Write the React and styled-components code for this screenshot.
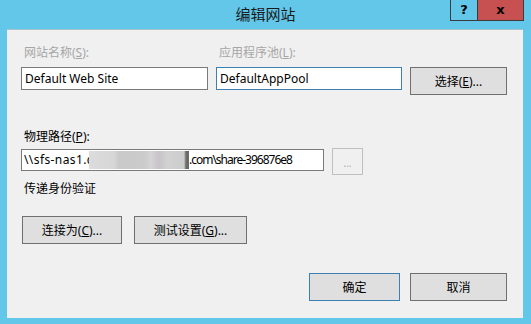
import React from 'react';
import styled, { createGlobalStyle } from 'styled-components';

const GlobalStyle = createGlobalStyle`
  body {
    margin: 0;
    background: #63c7ea;
    font-family: "Noto Sans", "Noto Sans CJK SC", sans-serif;
    font-size: 12px;
    color: #000;
  }
`;

const App = () => {
  return (
    <Window>
      <GlobalStyle />
      <TitleBar>
        <Title>编辑网站</Title>
        <Controls>
          <CaptionButton>?</CaptionButton>
          <CaptionButton $close>x</CaptionButton>
        </Controls>
      </TitleBar>

      <Client>
        <SiteGrid>
          <Label $disabled>网站名称(<u>S</u>):</Label>
          <Label $disabled>应用程序池(<u>L</u>):</Label>
          <span />
          <TextBox>Default Web Site</TextBox>
          <TextBox $focused>DefaultAppPool</TextBox>
          <Button>选择(<u>E</u>)...</Button>
        </SiteGrid>

        <PathLabel>物理路径(<u>P</u>):</PathLabel>
        <PathRow>
          <PathBox>
            <PathPart $spacing={0.4}>\\sfs-nas1.c</PathPart>
            <Blur />
            <PathPart $spacing={-1}>.com\share-396876e8</PathPart>
          </PathBox>
          <BrowseButton>...</BrowseButton>
        </PathRow>

        <AuthText>传递身份验证</AuthText>

        <ActionRow>
          <Button $width={100}>连接为(<u>C</u>)...</Button>
          <Button $width={113}>测试设置(<u>G</u>)...</Button>
        </ActionRow>

        <Footer>
          <Button $width={91} $default>确定</Button>
          <Button $width={97}>取消</Button>
        </Footer>
      </Client>
    </Window>
  );
};

const Window = styled.div`
  width: 531px;
  height: 324px;
  display: flex;
  flex-direction: column;
  background: #63c7ea;
`;

const TitleBar = styled.div`
  height: 29px;
  display: grid;
  grid-template-columns: 1fr auto 1fr;
`;

const Title = styled.div`
  grid-column: 2;
  font-size: 15px;
  line-height: 29px;
  color: #1a1a1a;
`;

const Controls = styled.div`
  grid-column: 3;
  justify-self: end;
  align-self: start;
  display: flex;
  margin-right: 7px;
`;

const CaptionButton = styled.div`
  width: ${(p) => (p.$close ? 46 : 28)}px;
  height: 21px;
  box-sizing: border-box;
  border: 1px solid #3c3c3c;
  border-top: none;
  border-left-width: ${(p) => (p.$close ? 0 : 1)}px;
  background: ${(p) => (p.$close ? '#c75050' : '#63c7ea')};
  display: flex;
  align-items: center;
  justify-content: center;
  font-family: "DejaVu Sans", sans-serif;
  font-weight: bold;
  font-size: 13px;
  line-height: 1;
  padding-bottom: 2px;
`;

const Client = styled.div`
  flex: 1;
  margin: 0 8px 6px 7px;
  background: #f0f0f0;
  border-top: 1px solid #a9c3d0;
  padding: 15px 16px 0 14px;
  display: flex;
  flex-direction: column;
`;

const SiteGrid = styled.div`
  display: grid;
  grid-template-columns: 187px 186px 97px;
  column-gap: 8px;
  row-gap: 6px;
  align-items: start;
`;

const Label = styled.div`
  line-height: 16px;
  padding-left: 3px;
  color: ${(p) => (p.$disabled ? '#a6a6a6' : '#000')};
  white-space: nowrap;
`;

const TextBox = styled.div`
  height: 23px;
  box-sizing: border-box;
  border: 1px solid ${(p) => (p.$focused ? '#3c7fb1' : '#7a7a7a')};
  background: #fff;
  padding: 0 3px;
  line-height: 21px;
  white-space: nowrap;
  overflow: hidden;
`;

const Button = styled.div`
  width: ${(p) => (p.$width ? `${p.$width}px` : 'auto')};
  height: 28px;
  box-sizing: border-box;
  border: 1px solid ${(p) => (p.$default ? '#3c7fb1' : '#707070')};
  background: #dfdfdf;
  display: flex;
  align-items: center;
  justify-content: center;
  white-space: nowrap;
`;

const PathLabel = styled(Label)`
  margin-top: 34px;
`;

const PathRow = styled.div`
  margin-top: 3px;
  display: flex;
  align-items: flex-start;
  gap: 8px;
`;

const PathBox = styled(TextBox)`
  width: 303px;
  height: 22px;
  margin-top: 1px;
  line-height: 20px;
  padding: 0 2px;
  display: flex;
  align-items: center;
`;

const PathPart = styled.span`
  letter-spacing: ${(p) => p.$spacing}px;
`;

const Blur = styled.span`
  display: inline-block;
  width: 100px;
  height: 18px;
  margin-left: -4px;
  background: linear-gradient(
    90deg,
    #dcdcdc 0%,
    #d8d6d8 25%,
    #c9c9c9 30%,
    #cbcbcb 55%,
    #d6d4d6 62%,
    #c6c4c6 70%,
    #d2d2d2 78%,
    #cccccc 95%,
    #6a6a6a 97%,
    #6a6a6a 100%
  );
`;

const BrowseButton = styled.div`
  width: 31px;
  height: 27px;
  box-sizing: border-box;
  border: 1px solid #bfbfbf;
  background: #f0f0f0;
  color: #a6a6a6;
  display: flex;
  align-items: flex-end;
  justify-content: center;
  padding-bottom: 6px;
  font-size: 10px;
  line-height: 1;
`;

const AuthText = styled(Label)`
  margin-top: 6px;
`;

const ActionRow = styled.div`
  margin-top: 19px;
  margin-left: 1px;
  display: flex;
  gap: 12px;
`;

const Footer = styled.div`
  margin-top: 29px;
  display: flex;
  justify-content: flex-end;
  gap: 10px;
`;

export default App;
